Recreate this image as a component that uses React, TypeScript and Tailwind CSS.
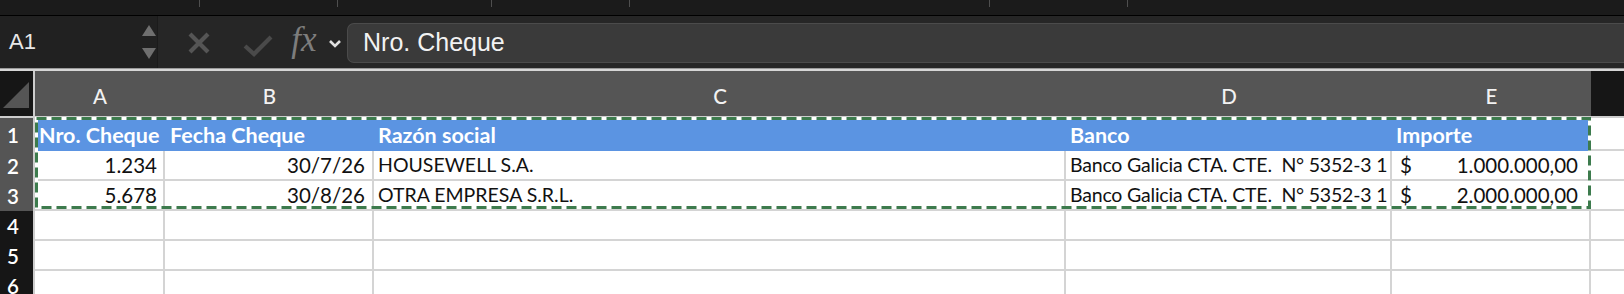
import React from "react";

type Col = { id: string; w: string };

const cols: Col[] = [
  { id: "A", w: "w-[130px]" },
  { id: "B", w: "w-[209px]" },
  { id: "C", w: "w-[692px]" },
  { id: "D", w: "w-[326px]" },
  { id: "E", w: "w-[199px]" },
];

const data = [
  { cheque: "1.234", fecha: "30/7/26", razon: "HOUSEWELL S.A.", banco: "Banco Galicia CTA. CTE.  N° 5352-3 1", importe: "1.000.000,00" },
  { cheque: "5.678", fecha: "30/8/26", razon: "OTRA EMPRESA S.R.L.", banco: "Banco Galicia CTA. CTE.  N° 5352-3 1", importe: "2.000.000,00" },
];

const cellFont = "font-['Lato',sans-serif]";
const grid = "border-r-2 border-b-2 border-[#d4d4d4]";

function RowHead({ n, selected, h }: { n: number; selected: boolean; h: string }) {
  return (
    <div
      className={`${h} w-[35px] shrink-0 border-r-2 border-[#cdcdcd] flex items-center pl-[7px] pt-[1px] text-[20.5px] font-semibold text-white ${
        selected ? "bg-[#555555]" : "bg-[#161616]"
      }`}
    >
      {n}
    </div>
  );
}

function FormulaBar() {
  return (
    <div className="flex h-[52px] bg-[#262626] font-['Liberation_Sans',sans-serif]">
      {/* cuadro de nombre */}
      <div className="w-[158px] shrink-0 bg-[#212121] border-r border-[#1b1b1b] flex items-center justify-between pl-[9px] pr-[1px]">
        <span className="text-[22px] text-[#e8e8e8] leading-none">A1</span>
        <svg width="14" height="52" viewBox="0 0 14 52">
          <polygon points="7,9 14,20 0,20" fill="#6f6f6f" />
          <polygon points="0,32 14,32 7,43" fill="#6f6f6f" />
        </svg>
      </div>

      <div className="w-[29px] shrink-0" />
      <svg width="24" height="52" viewBox="0 0 24 52" className="shrink-0">
        <path d="M3 18 L21 36 M21 18 L3 36" stroke="#555555" strokeWidth="4.2" />
      </svg>
      <div className="w-[32px] shrink-0" />
      <svg width="30" height="52" viewBox="0 0 30 52" className="shrink-0">
        <path d="M2 30 L11 38 L28 21" stroke="#4a4a4a" strokeWidth="4.2" fill="none" />
      </svg>
      <div className="w-[13px] shrink-0" />
      <div className="w-[36px] shrink-0 flex items-center justify-center font-['Liberation_Serif',serif] italic text-[35px] text-[#7d7d7d] leading-none pb-[6px]">
        fx
      </div>
      <div className="w-[6px] shrink-0" />
      <svg width="14" height="52" viewBox="0 0 14 52" className="shrink-0">
        <path d="M2 25 L7 30 L12 25" stroke="#e0e0e0" strokeWidth="2.6" fill="none" />
      </svg>
      <div className="w-[5px] shrink-0" />

      {/* contenido de la celda */}
      <div className="flex-1 self-center mt-[1px] h-[40px] rounded-l-[7px] bg-[#3a3a3a] border border-r-0 border-[#4b4b4b] flex items-center pl-[15px] text-[25px] text-[#f2f2f2]">
        Nro. Cheque
      </div>
    </div>
  );
}

export default function App() {
  const ticks = ["w-[138px]", "w-[154px]", "w-[138px]", "w-[360px]", "w-[138px]", "w-[137px]"];

  return (
    <div className="relative w-[1624px] h-[294px] overflow-hidden bg-white">
      {/* barra superior */}
      <div className="flex h-[15px] bg-[#1b1b1b]">
        <div className="w-[199px] shrink-0" />
        {ticks.map((w, i) => (
          <div key={i} className={`${w} h-[7px] shrink-0 border-l border-[#4f4f4f]`} />
        ))}
      </div>
      <div className="h-[1px] bg-black" />

      <FormulaBar />
      <div className="h-[1px] bg-[#9a9a9a]" />
      <div className="h-[2px] bg-[#d6d6d6]" />

      {/* hoja */}
      <div className={cellFont}>
        <div className="flex h-[47px] border-b-2 border-[#cdcdcd]">
          <div className="w-[35px] shrink-0 bg-[#161616] border-r-2 border-[#cdcdcd]">
            <svg width="33" height="45" viewBox="0 0 33 45">
              <polygon points="3,37 29,11 29,37" fill="#555555" />
            </svg>
          </div>
          {cols.map((c) => (
            <div
              key={c.id}
              className={`${c.w} shrink-0 bg-[#555555] flex items-center justify-center pt-[5px] text-[20.5px] font-medium text-[#f2f2f2]`}
            >
              {c.id}
            </div>
          ))}
          <div className="flex-1 bg-[#161616]" />
        </div>

        {/* fila 1 */}
        <div className="flex h-[33px]">
          <RowHead n={1} selected h="h-[33px]" />
          <div className="flex bg-[#5b94e2] text-white font-bold text-[21.5px] leading-none">
            <div className="w-[130px] shrink-0 overflow-hidden whitespace-nowrap flex items-center pl-[4px] pt-[2px]">Nro. Cheque</div>
            <div className="w-[209px] shrink-0 overflow-hidden whitespace-nowrap flex items-center pl-[5px] pt-[2px]">Fecha Cheque</div>
            <div className="w-[692px] shrink-0 overflow-hidden whitespace-nowrap flex items-center pl-[4px] pt-[2px]">Razón social</div>
            <div className="w-[326px] shrink-0 overflow-hidden whitespace-nowrap flex items-center pl-[4px] pt-[2px]">Banco</div>
            <div className="w-[199px] shrink-0 overflow-hidden whitespace-nowrap flex items-center pl-[4px] pt-[2px]">Importe</div>
          </div>
          <div className="flex-1 border-b-2 border-[#d4d4d4]" />
        </div>

        {/* filas con datos */}
        {data.map((r, i) => (
          <div key={i} className="flex h-[30px] text-[#111111] leading-none">
            <RowHead n={i + 2} selected h="h-[30px]" />
            <div className={`w-[130px] shrink-0 ${grid} flex items-center justify-end pr-[6px] text-[20.5px]`}>{r.cheque}</div>
            <div className={`w-[209px] shrink-0 ${grid} flex items-center justify-end pr-[7px] text-[20.5px]`}>{r.fecha}</div>
            <div className={`w-[692px] shrink-0 ${grid} flex items-center pl-[4px] text-[19.5px]`}>{r.razon}</div>
            <div className={`w-[326px] shrink-0 ${grid} flex items-center pl-[4px] overflow-hidden whitespace-pre text-[19.5px] tracking-[-0.2px]`}>{r.banco}</div>
            <div className={`w-[199px] shrink-0 ${grid} flex items-center justify-between pl-[8px] pr-[11px] text-[20.5px]`}>
              <span>$</span>
              <span>{r.importe}</span>
            </div>
            <div className="flex-1 border-b-2 border-[#d4d4d4]" />
          </div>
        ))}

        {/* filas vacías */}
        {[4, 5, 6].map((n) => (
          <div key={n} className="flex h-[30px]">
            <RowHead n={n} selected={false} h="h-[30px]" />
            {cols.map((c) => (
              <div key={c.id} className={`${c.w} shrink-0 ${grid}`} />
            ))}
            <div className="flex-1 border-b-2 border-[#d4d4d4]" />
          </div>
        ))}
      </div>

      {/* marco de copia (hormigas) */}
      <svg
        className="absolute left-[35px] top-[117px] pointer-events-none"
        width="1556"
        height="92"
        viewBox="0 0 1556 92"
      >
        <rect x="1.5" y="1.5" width="1553" height="89" fill="none" stroke="#ffffff" strokeWidth="3" />
        <rect x="1.5" y="1.5" width="1553" height="89" fill="none" stroke="#3d7b4d" strokeWidth="3" strokeDasharray="10 5" />
      </svg>
    </div>
  );
}
